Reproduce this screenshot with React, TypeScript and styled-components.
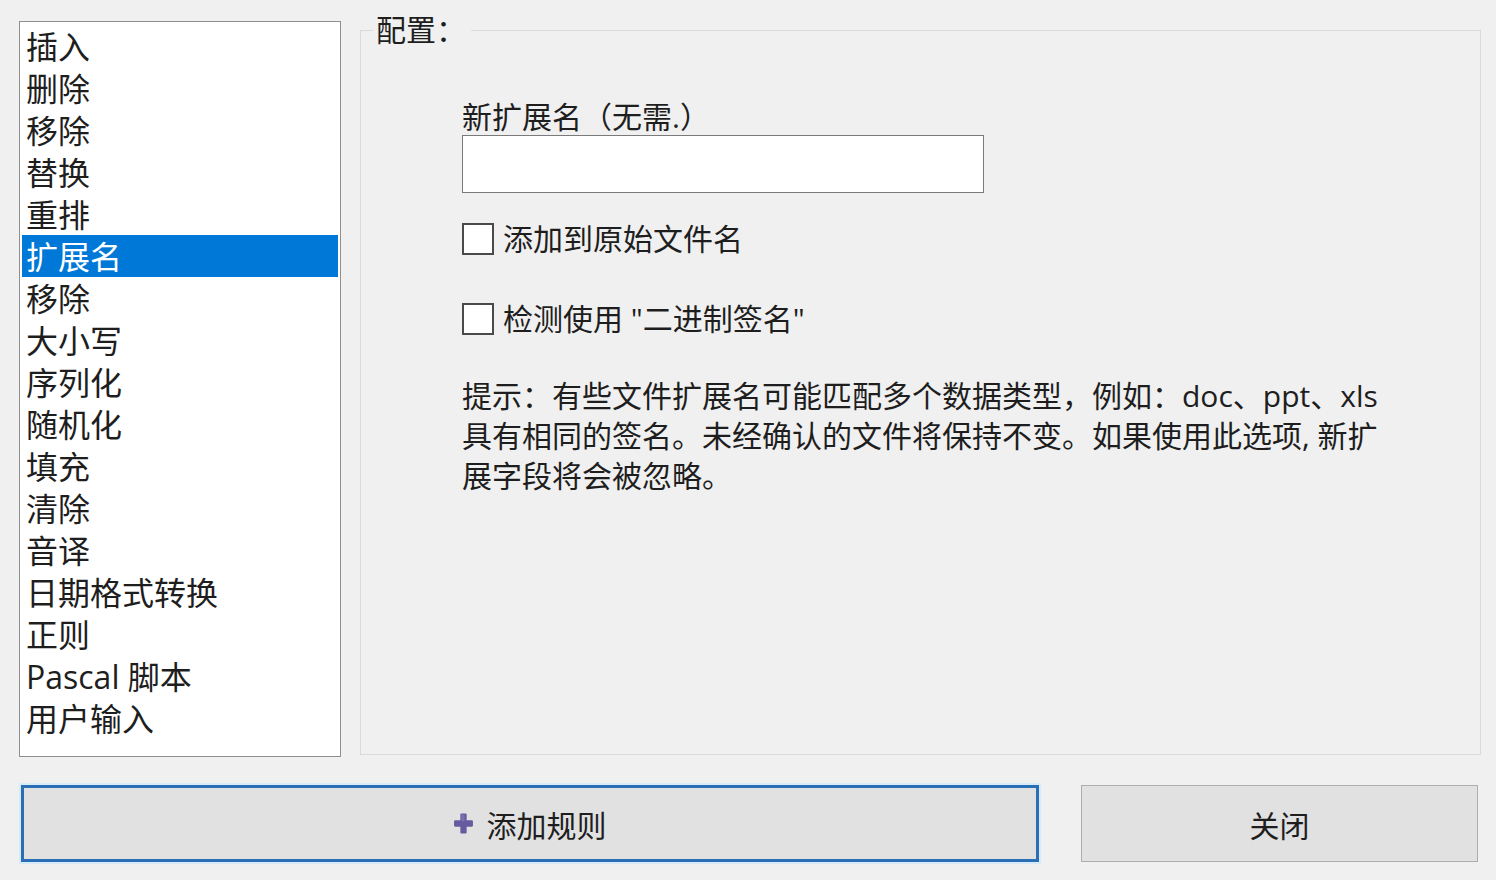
import React from "react";
import styled, { createGlobalStyle } from "styled-components";

const GlobalStyle = createGlobalStyle`
  html, body {
    margin: 0;
    padding: 0;
    background: #f0f0f0;
  }
  body {
    width: 1496px;
    height: 880px;
    overflow: hidden;
    font-family: "Open Sans", "Noto Sans CJK SC", sans-serif;
    color: #1e1e1e;
  }
  * { box-sizing: border-box; }
`;

const Page = styled.div`
  width: 1496px;
  height: 880px;
  display: flex;
  flex-direction: column;
`;

const MainRow = styled.div`
  display: flex;
  align-items: flex-start;
  gap: 19px;
  padding: 12px 15px 0 19px;
`;

const RuleList = styled.ul`
  list-style: none;
  margin: 9px 0 0 0;
  width: 322px;
  height: 736px;
  padding: 3px 2px;
  background: #ffffff;
  border: 1px solid #8f8f8f;
  flex-shrink: 0;
`;

const RuleItem = styled.li<{ $selected?: boolean }>`
  font-size: 32px;
  line-height: 40px;
  height: 42px;
  padding: 2px 0 0 4px;
  white-space: nowrap;
  background: ${(p) => (p.$selected ? "#0078d7" : "transparent")};
  color: ${(p) => (p.$selected ? "#ffffff" : "#1e1e1e")};
`;

const GroupBox = styled.fieldset`
  flex: 1;
  margin: 0;
  padding: 0 0 0 101px;
  height: 743px;
  border: 1px solid #dadada;
  min-width: 0;
`;

const GroupLegend = styled.legend`
  font-size: 30px;
  line-height: 36px;
  padding: 0 5px 0 3px;
  margin-left: -89px;
`;

const FieldLabel = styled.div`
  font-size: 30px;
  line-height: 36px;
  margin-top: 51px;
  white-space: nowrap;
`;

const TextInput = styled.input`
  display: block;
  width: 522px;
  height: 58px;
  margin: 0;
  border: 1px solid #7a7a7a;
  background: #ffffff;
  font-size: 30px;
  padding: 0 6px;
  outline: none;
`;

const CheckRow = styled.label<{ $gap: number }>`
  display: flex;
  align-items: center;
  gap: 9px;
  height: 36px;
  margin-top: ${(p) => p.$gap}px;
  font-size: 30px;
  line-height: 36px;
  white-space: nowrap;
`;

const CheckBox = styled.span`
  width: 32px;
  height: 32px;
  border: 2px solid #4a4a4a;
  background: #ffffff;
  flex-shrink: 0;
`;

const Hint = styled.p`
  margin: 39px 0 0 0;
  font-size: 30px;
  line-height: 40px;
  white-space: nowrap;
`;

const ButtonRow = styled.div`
  display: flex;
  gap: 42px;
  padding-left: 21px;
  margin-top: 28px;
`;

const DialogButton = styled.button<{ $primary?: boolean; $width: number }>`
  width: ${(p) => p.$width}px;
  height: 77px;
  display: flex;
  align-items: center;
  justify-content: center;
  gap: 14px;
  margin: 0;
  padding: 0;
  background: #e1e1e1;
  border: ${(p) => (p.$primary ? "3px solid #2a6fb5" : "1px solid #adadad")};
  box-shadow: ${(p) => (p.$primary ? "0 0 0 2px #d7eaf8" : "none")};
  font-family: "Open Sans", "Noto Sans CJK SC", sans-serif;
  font-size: 30px;
  color: #1e1e1e;
`;

const PlusIcon = () => (
  <svg width="19" height="21" viewBox="0 0 18 20" aria-hidden="true">
    <path
      d="M6 1.5 Q6 0.5 7 0.5 H11 Q12 0.5 12 1.5 V7 H17 Q18 7 18 8 V12 Q18 13 17 13 H12 V18.5 Q12 19.5 11 19.5 H7 Q6 19.5 6 18.5 V13 H1 Q0 13 0 12 V8 Q0 7 1 7 H6 Z"
      fill="#675a9f"
    />
    <path d="M7 1.5 H10 V8 H7 Z" fill="#8b7fc0" opacity="0.6" />
  </svg>
);

const rules = [
  "插入",
  "删除",
  "移除",
  "替换",
  "重排",
  "扩展名",
  "移除",
  "大小写",
  "序列化",
  "随机化",
  "填充",
  "清除",
  "音译",
  "日期格式转换",
  "正则",
  "Pascal 脚本",
  "用户输入",
];

export default function App() {
  return (
    <>
      <GlobalStyle />
      <Page>
        <MainRow>
          <RuleList>
            {rules.map((r, i) => (
              <RuleItem key={i} $selected={i === 5}>
                {r}
              </RuleItem>
            ))}
          </RuleList>
          <GroupBox>
            <GroupLegend>配置：</GroupLegend>
            <FieldLabel>新扩展名（无需.）</FieldLabel>
            <TextInput type="text" />
            <CheckRow $gap={28}>
              <CheckBox />
              添加到原始文件名
            </CheckRow>
            <CheckRow $gap={44}>
              <CheckBox />
              检测使用 "二进制签名"
            </CheckRow>
            <Hint>
              提示：有些文件扩展名可能匹配多个数据类型，例如：doc、ppt、xls
              <br />
              具有相同的签名。未经确认的文件将保持不变。如果使用此选项, 新扩
              <br />
              展字段将会被忽略。
            </Hint>
          </GroupBox>
        </MainRow>
        <ButtonRow>
          <DialogButton $primary $width={1018}>
            <PlusIcon />
            添加规则
          </DialogButton>
          <DialogButton $width={397}>关闭</DialogButton>
        </ButtonRow>
      </Page>
    </>
  );
}
